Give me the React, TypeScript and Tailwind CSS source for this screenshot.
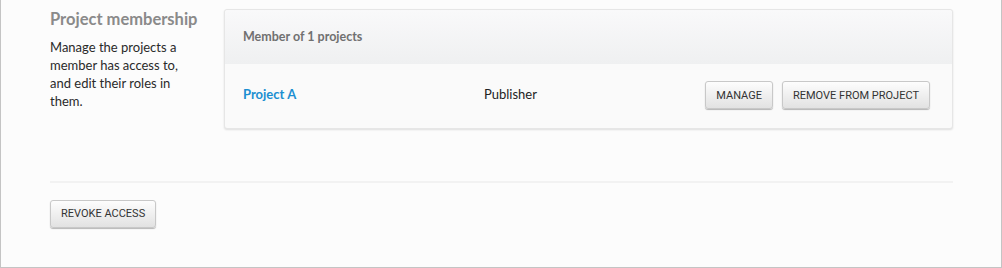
const btn =
  "h-[28px] px-[10px] rounded-[3px] border border-[#c8c8c8] bg-gradient-to-b from-[#fdfdfd] to-[#e2e2e2] shadow-[0_1px_1px_rgba(0,0,0,0.28)] font-['Roboto',sans-serif] text-[11px] leading-none text-[#333] uppercase";

function MembershipCard() {
  return (
    <div className="flex-1 rounded-[3px] border border-[#e6e6e6] bg-[#fafafa] shadow-[0_1px_2px_rgba(0,0,0,0.12)]">
      <div className="h-[54px] flex items-center px-[18px] bg-gradient-to-b from-[#f9f9fa] to-[#eff0f1] rounded-t-[3px]">
        <span className="text-[12.5px] font-bold text-[#707070]">Member of 1 projects</span>
      </div>
      <div className="h-[64px] flex items-center pl-[18px] pr-[22px] pb-[2px]">
        <a href="#" className="w-[241px] text-[13px] font-bold text-[#1b8fd1]">
          Project A
        </a>
        <span className="text-[13px] text-[#222]">Publisher</span>
        <div className="ml-auto flex gap-[9px]">
          <button className={btn}>Manage</button>
          <button className={btn}>Remove from project</button>
        </div>
      </div>
    </div>
  );
}

export default function App() {
  return (
    <div
      className="w-[1002px] h-[268px] bg-[#fcfcfc] border-l border-r border-b border-[#c4c4c4] overflow-hidden"
      style={{ fontFamily: "Lato, 'Open Sans', sans-serif" }}
    >
      <div className="pl-[49px] pr-[48px] pt-[9px]">
        <div className="flex gap-[25px]">
          <div className="w-[149px]">
            <h2 className="text-[16.5px] font-bold text-[#8a8a8a] leading-[20px]">Project membership</h2>
            <p className="mt-[9px] text-[13px] leading-[18px] text-[#2a2a2a]">
              Manage the projects a member has access to, and edit their roles in them.
            </p>
          </div>
          <MembershipCard />
        </div>
        <div className="mt-[52px] border-t-2 border-[#f2f2f2]" />
        <div className="pt-[16px]">
          <button className={btn}>Revoke access</button>
        </div>
      </div>
    </div>
  );
}
